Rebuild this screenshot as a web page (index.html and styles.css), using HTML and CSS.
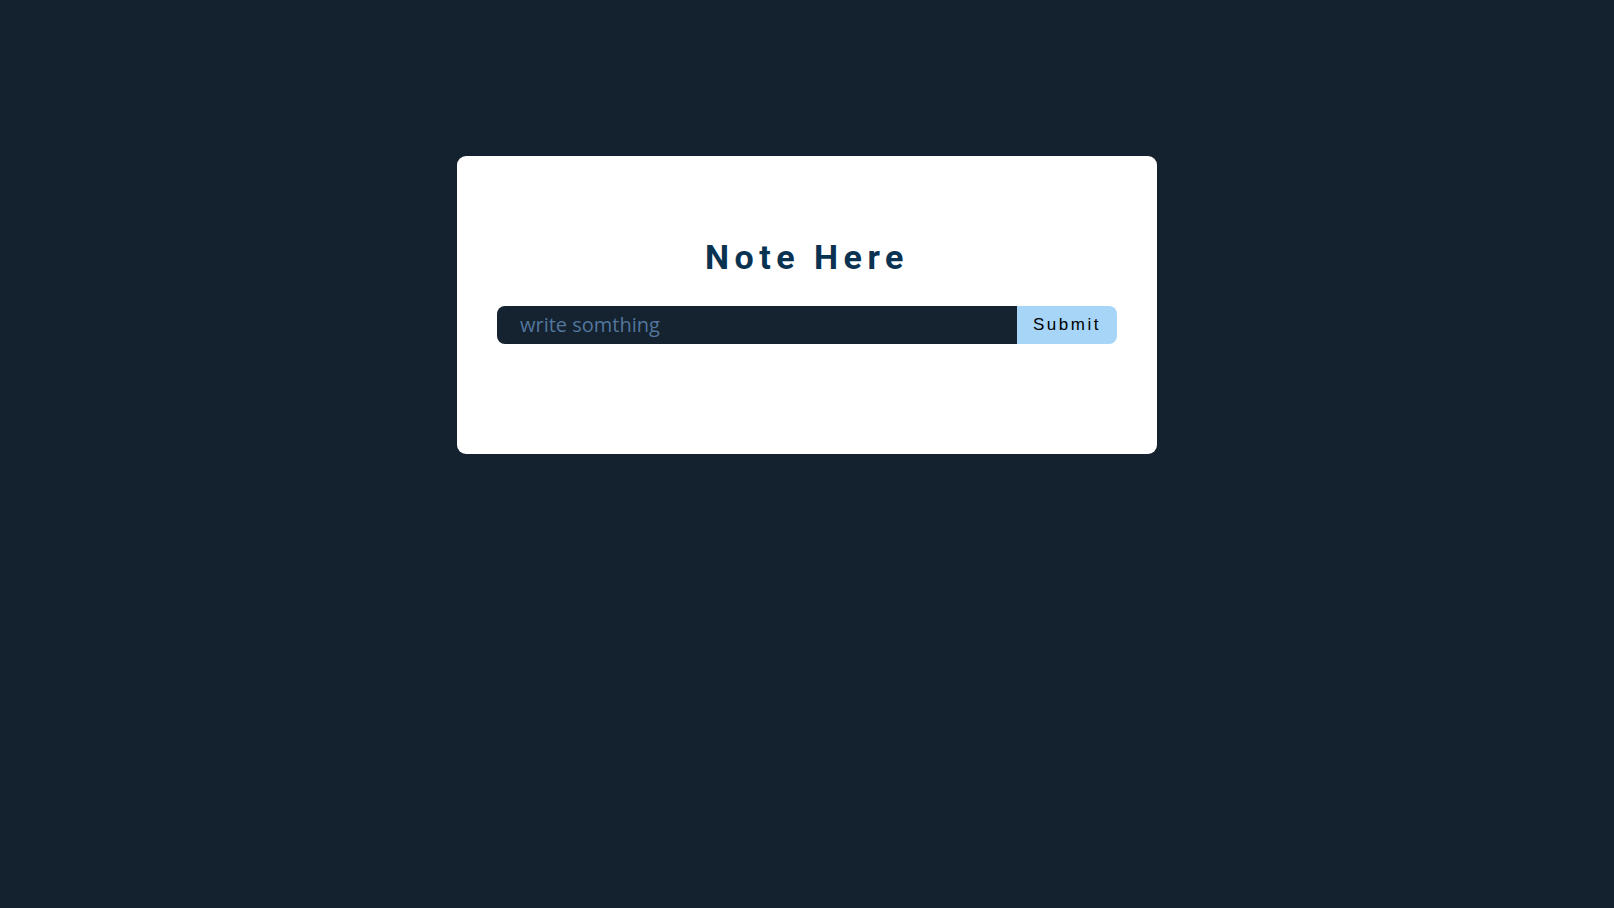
FILE: index.html
```html
<!DOCTYPE html>
<html lang="en">
<head>
<meta charset="utf-8">
<title>Note Here</title>
<link rel="stylesheet" href="styles.css">
</head>
<body>
<main class="card">
  <h1 class="title">Note Here</h1>
  <form class="note-form">
    <input class="note-input" type="text" placeholder="write somthing">
    <button class="note-submit" type="button">Submit</button>
  </form>
</main>
</body>
</html>
```
FILE: styles.css
```css
html, body {
  margin: 0;
  padding: 0;
}
body {
  background: #142230;
  min-height: 100vh;
  font-family: "Open Sans", sans-serif;
}
.card {
  box-sizing: border-box;
  width: 700px;
  height: 298px;
  margin: 156px auto 0;
  padding: 81px 40px 40px;
  background: #ffffff;
  border-radius: 9px;
}
.title {
  margin: 0;
  font-family: Roboto, "Liberation Sans", sans-serif;
  font-weight: 700;
  font-size: 34px;
  line-height: 40px;
  letter-spacing: 5.5px;
  text-align: center;
  color: #0a3352;
}
.note-form {
  display: flex;
  margin-top: 29px;
  height: 38px;
}
.note-input {
  flex: 1;
  min-width: 0;
  box-sizing: border-box;
  height: 38px;
  border: none;
  outline: none;
  margin: 0;
  padding: 0 0 2px 23px;
  background: #15222f;
  color: #ffffff;
  border-radius: 8px 0 0 8px;
  font-family: "Open Sans", sans-serif;
  font-size: 20px;
}
.note-input::placeholder {
  color: #52769d;
}
.note-submit {
  width: 100px;
  height: 38px;
  margin: 0;
  padding: 0;
  border: none;
  background: #a6d5f8;
  color: #000000;
  border-radius: 0 8px 8px 0;
  font-family: "Liberation Sans", Arial, sans-serif;
  font-size: 17px;
  letter-spacing: 2.5px;
  cursor: pointer;
}
```
